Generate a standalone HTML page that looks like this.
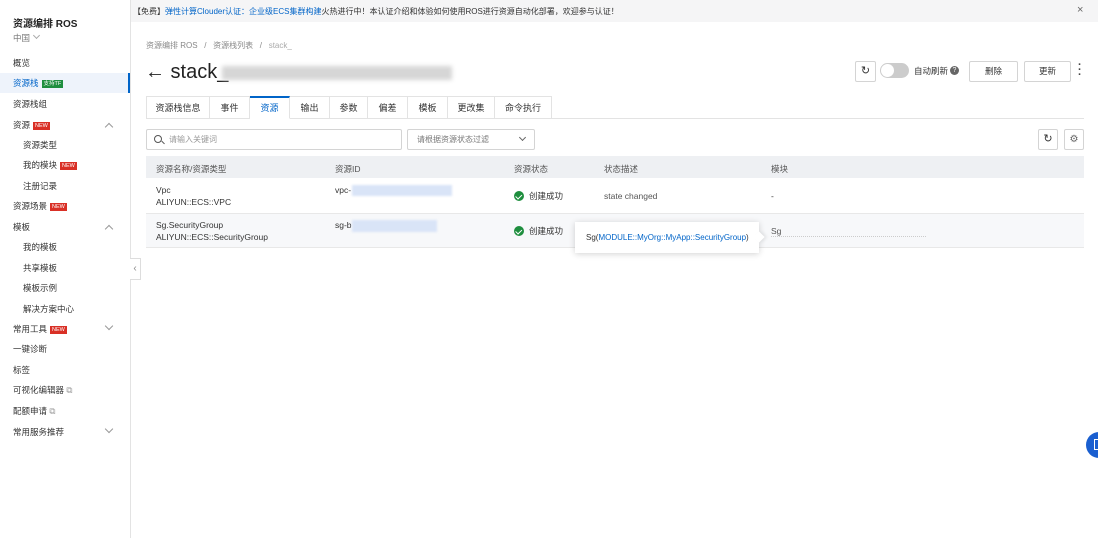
<!DOCTYPE html>
<html><head><meta charset="utf-8"><style>
*{box-sizing:border-box;margin:0;padding:0}
body{width:1098px;height:538px;overflow:hidden;background:#fff;font-family:"Liberation Sans","Noto Sans CJK SC",sans-serif;font-size:9px;color:#333;position:relative}
.a{position:absolute;white-space:nowrap}
.side{position:absolute;left:0;top:0;width:131px;height:538px;border-right:1px solid #e3e3e3;background:#fff}
.si{position:absolute;left:13px;font-size:8.5px;color:#333}
.sub{left:23px}
.new{display:inline-block;background:#d93026;color:#fff;font-size:5.5px;padding:0 2px;line-height:8px;margin-left:3px;vertical-align:1px}
.chev{position:absolute;left:106px;width:6px;height:6px;border-left:1px solid #999;border-top:1px solid #999}
.blue{color:#0064c8}
.tab{position:absolute;top:96px;height:23px;border:1px solid #e3e3e3;border-left:none;font-size:9px;text-align:center;line-height:22px;color:#333;background:#fff}
.btn{position:absolute;border:1px solid #d4d4d4;background:#fff;border-radius:2px;text-align:center;font-size:8.5px;color:#333}
.th{position:absolute;top:163px;font-size:8.5px;color:#555}
.c{position:absolute;font-size:8.5px;color:#333;line-height:12px}
.ok{display:inline-block;width:10px;height:10px;border-radius:50%;background:#1e8e3e;vertical-align:-2px;margin-right:5px;position:relative}
.ok:after{content:"";position:absolute;left:3px;top:1.5px;width:2.5px;height:4.5px;border:solid #fff;border-width:0 1.3px 1.3px 0;transform:rotate(45deg)}
.blur{position:absolute;background:#d9e4f7;filter:blur(1px)}
</style></head><body>
<div class="side">
<div class="si" style="top:15px;font-size:10px;font-weight:bold;color:#222">资源编排 ROS</div>
<div class="si" style="top:32px;color:#777">中国 <span style="display:inline-block;width:5px;height:5px;border-right:1px solid #aaa;border-bottom:1px solid #aaa;transform:rotate(45deg);vertical-align:3px;margin-left:2px"></span></div>
<div class="si" style="top:57px">概览</div>
<div style="position:absolute;left:0;top:73px;width:130px;height:20px;background:#eef3fb;border-right:2px solid #0064c8"></div>
<div class="si blue" style="top:77px">资源栈<span class="new" style="background:#1e8e3e">支持TF</span></div>
<div class="si" style="top:98px">资源栈组</div>
<div class="si" style="top:119px">资源<span class="new">NEW</span></div><div class="chev" style="top:124px;transform:rotate(45deg)"></div>
<div class="si sub" style="top:139px">资源类型</div>
<div class="si sub" style="top:159px">我的模块<span class="new">NEW</span></div>
<div class="si sub" style="top:180px">注册记录</div>
<div class="si" style="top:200px">资源场景<span class="new">NEW</span></div>
<div class="si" style="top:221px">模板</div><div class="chev" style="top:226px;transform:rotate(45deg)"></div>
<div class="si sub" style="top:241px">我的模板</div>
<div class="si sub" style="top:262px">共享模板</div>
<div class="si sub" style="top:282px">模板示例</div>
<div class="si sub" style="top:303px">解决方案中心</div>
<div class="si" style="top:323px">常用工具<span class="new">NEW</span></div><div class="chev" style="top:323px;transform:rotate(225deg)"></div>
<div class="si" style="top:343px">一键诊断</div>
<div class="si" style="top:364px">标签</div>
<div class="si" style="top:384px">可视化编辑器 <span style="color:#999">⧉</span></div>
<div class="si" style="top:405px">配额申请 <span style="color:#999">⧉</span></div>
<div class="si" style="top:426px">常用服务推荐</div><div class="chev" style="top:426px;transform:rotate(225deg)"></div>
</div>
<div style="position:absolute;left:130px;top:258px;width:11px;height:22px;border:1px solid #ddd;border-left:none;background:#fff;font-size:10px;color:#888;line-height:20px;text-align:center">‹</div>
<div style="position:absolute;left:131px;top:0;width:967px;height:22px;background:#f5f5f6"></div>
<div class="a" style="left:133px;top:6px;font-size:8px;color:#333">【免费】<span class="blue">弹性计算Clouder认证：企业级ECS集群构建</span>火热进行中！本认证介绍和体验如何使用ROS进行资源自动化部署，欢迎参与认证！</div>
<div class="a" style="left:1077px;top:4px;font-size:11px;color:#666">×</div>
<div class="a" style="left:146px;top:40px;font-size:8px;color:#888">资源编排 ROS &nbsp;&nbsp;/&nbsp;&nbsp; 资源栈列表 &nbsp;&nbsp;/&nbsp;&nbsp; <span style="color:#aaa">stack_</span></div>
<div class="a" style="left:145px;top:61px;font-size:20px;color:#222">← stack_</div>
<div style="position:absolute;left:222px;top:66px;width:230px;height:14px;background:#ccc;filter:blur(2px);opacity:.8"></div>
<div class="btn" style="left:855px;top:61px;width:21px;height:21px;line-height:19px;font-size:11px">↻</div>
<div style="position:absolute;left:880px;top:63px;width:29px;height:15px;border-radius:8px;background:#ccc"><div style="position:absolute;left:1px;top:1px;width:13px;height:13px;border-radius:50%;background:#fff"></div></div>
<div class="a" style="left:914px;top:65px;font-size:8.5px">自动刷新</div>
<div style="position:absolute;left:950px;top:66px;width:9px;height:9px;border-radius:50%;background:#666;color:#fff;font-size:7px;text-align:center;line-height:9px">?</div>
<div class="btn" style="left:969px;top:61px;width:49px;height:21px;line-height:19px">删除</div>
<div class="btn" style="left:1024px;top:61px;width:47px;height:21px;line-height:19px">更新</div>
<div class="a" style="left:1078px;top:63px;font-size:11px;font-weight:bold;color:#444;line-height:5px">·<br>·<br>·</div>
<div style="position:absolute;left:146px;top:118px;width:938px;height:1px;background:#e3e3e3"></div>
<div class="tab" style="left:146px;width:64px;border-left:1px solid #e3e3e3">资源栈信息</div>
<div class="tab" style="left:210px;width:40px">事件</div>
<div class="tab" style="left:250px;width:40px;color:#0064c8;border-top:2px solid #0064c8;border-bottom-color:#fff;line-height:20px">资源</div>
<div class="tab" style="left:290px;width:40px">输出</div>
<div class="tab" style="left:330px;width:38px">参数</div>
<div class="tab" style="left:368px;width:40px">偏差</div>
<div class="tab" style="left:408px;width:40px">模板</div>
<div class="tab" style="left:448px;width:47px">更改集</div>
<div class="tab" style="left:495px;width:57px">命令执行</div>
<div class="btn" style="left:146px;top:129px;width:256px;height:21px;text-align:left;padding-left:22px;line-height:19px;color:#999;font-size:8px">请输入关键词</div>
<div style="position:absolute;left:154px;top:135px;width:8px;height:8px;border:1.3px solid #555;border-radius:50%"></div>
<div style="position:absolute;left:161px;top:142px;width:4px;height:1.3px;background:#555;transform:rotate(45deg)"></div>
<div class="btn" style="left:407px;top:129px;width:128px;height:21px;text-align:left;padding-left:9px;line-height:19px;color:#777;font-size:8px">请根据资源状态过滤</div>
<div style="position:absolute;left:520px;top:135px;width:5px;height:5px;border-right:1px solid #666;border-bottom:1px solid #666;transform:rotate(45deg)"></div>
<div class="btn" style="left:1038px;top:129px;width:20px;height:21px;line-height:19px;font-size:11px">↻</div>
<div class="btn" style="left:1064px;top:129px;width:20px;height:21px;line-height:19px;font-size:10px;color:#666">⚙</div>
<div style="position:absolute;left:146px;top:156px;width:938px;height:22px;background:#eef0f3"></div>
<div class="th" style="left:156px">资源名称/资源类型</div>
<div class="th" style="left:335px">资源ID</div>
<div class="th" style="left:514px">资源状态</div>
<div class="th" style="left:604px">状态描述</div>
<div class="th" style="left:771px">模块</div>
<div style="position:absolute;left:146px;top:213px;width:938px;height:35px;background:#f7f8fa;border-top:1px solid #e8e8e8;border-bottom:1px solid #e8e8e8"></div>
<div class="c" style="left:156px;top:184px">Vpc<br>ALIYUN::ECS::VPC</div>
<div class="c blue" style="left:335px;top:184px">vpc-</div><div class="blur" style="left:352px;top:185px;width:100px;height:11px"></div>
<div class="c" style="left:514px;top:190px"><span class="ok"></span>创建成功</div>
<div class="c" style="left:604px;top:190px;color:#555">state changed</div>
<div class="c" style="left:771px;top:190px">-</div>
<div class="c" style="left:156px;top:219px">Sg.SecurityGroup<br>ALIYUN::ECS::SecurityGroup</div>
<div class="c blue" style="left:335px;top:219px">sg-b</div><div class="blur" style="left:352px;top:220px;width:85px;height:12px"></div>
<div class="c" style="left:514px;top:225px"><span class="ok"></span>创建成功</div>
<div class="c" style="left:771px;top:225px;color:#555">Sg</div>
<div style="position:absolute;left:771px;top:236px;width:155px;border-top:1px dotted #ccc"></div>
<div style="position:absolute;left:575px;top:222px;width:184px;height:31px;background:#fff;box-shadow:0 1px 6px rgba(0,0,0,.18);font-size:8px;line-height:31px;padding-left:11px;color:#333">Sg(<span class="blue">MODULE::MyOrg::MyApp::SecurityGroup</span>)</div>
<div style="position:absolute;left:755px;top:233px;width:8px;height:8px;background:#fff;transform:rotate(45deg);box-shadow:2px -2px 3px rgba(0,0,0,.08)"></div>
<div style="position:absolute;left:1086px;top:432px;width:26px;height:26px;border-radius:50%;background:#1a5fd0"></div>
<div style="position:absolute;left:1094px;top:439px;width:6px;height:11px;border:1.3px solid #fff;border-right:none"></div>
</body></html>
